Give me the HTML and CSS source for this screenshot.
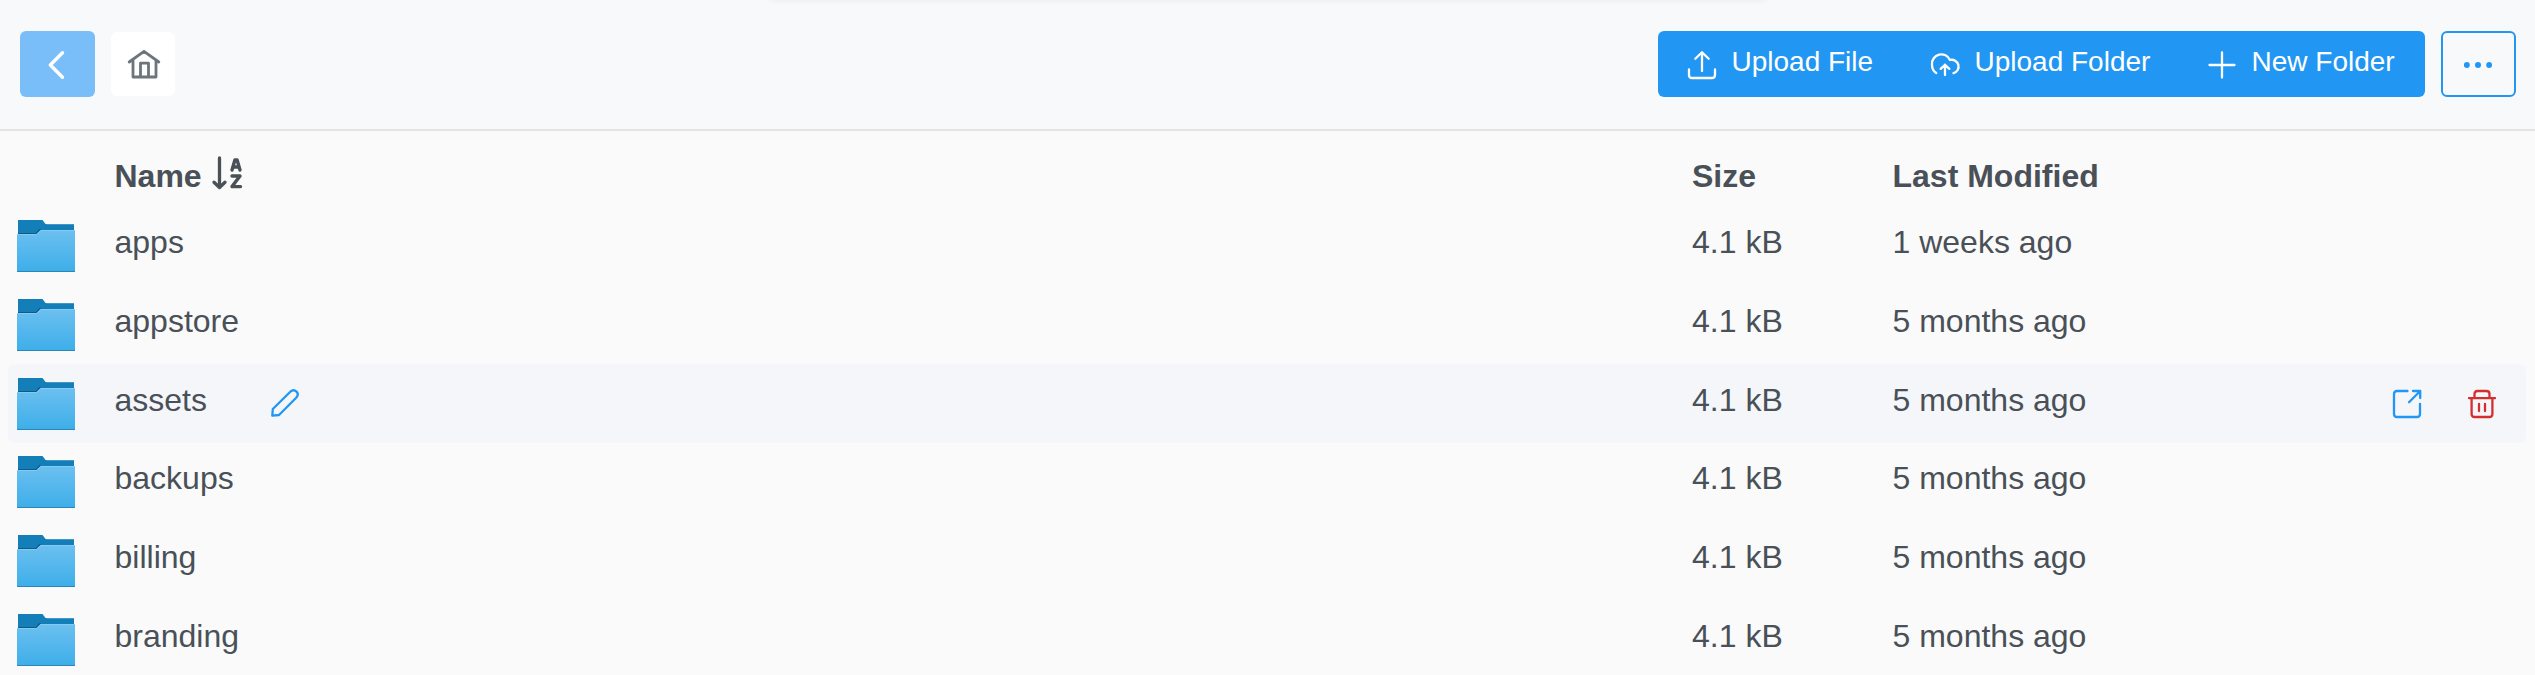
FILE: index.html
```
<!DOCTYPE html>
<html lang="en">
<head>
<meta charset="utf-8">
<title>Files</title>
<link rel="stylesheet" href="styles.css">
</head>
<body>
<svg class="defs" width="0" height="0">
  <defs>
    <linearGradient id="front" x1="0" y1="0" x2="0" y2="1">
      <stop offset="0" stop-color="#6cc0f0"/>
      <stop offset="1" stop-color="#3daee9"/>
    </linearGradient>
    <symbol id="folder" viewBox="0 0 58 52">
      <path d="M1 0H25.5L28.5 4H57V14H1Z" fill="#147eb8"/>
      <path d="M29 4H57V5H30Z" fill="#4398c6"/>
      <path d="M1 13H19L22 9.300H24V14H1Z" fill="#0e5b85"/>
      <path d="M0 14H19.500L23.500 10H58V52H0Z" fill="url(#front)"/>
      <path d="M0 14.500H19.700L23.700 10.500H58" fill="none" stroke="#84caf2" stroke-width="1"/>
      <path d="M0 51H58V52H0Z" fill="#2d86b5"/>
    </symbol>
  </defs>
</svg>
<div class="overhang"></div>
<header class="toolbar">
  <button class="btn back" aria-label="Back"><svg class="icon" width="28" height="28" viewBox="0 0 28 28"><path d="M19.500 1.800 7.300 14 19.500 26.200" stroke-width="3.400"/></svg></button>
  <button class="btn home" aria-label="Home"><svg class="icon" width="32" height="30" viewBox="0 0 32 30"><path d="M1.200 13 16 2.300 30.800 13M5 11V28H28V11M12.500 28V14.200H20.500V28" stroke-width="2.800"/></svg></button>
  <div class="group">
    <button class="btn primary file"><svg class="icon" width="28" height="28" viewBox="0 0 28 28"><path d="M14 20V1.500M7.300 7.800 14 1.200 20.700 7.800M1 18.500V24Q1 27 4 27H24Q27 27 27 24V18.500" stroke-width="2.300"/></svg><span>Upload File</span></button>
    <button class="btn primary folder"><svg class="icon" width="28" height="28" viewBox="0 0 28 28"><path d="M5.200 22Q1 19.500 1 13.500A9.400 9.400 0 0 1 19 9A6.800 6.800 0 0 1 22.500 22.200M14 24V13.700M9.700 17.900 14 13.700 18.300 17.900" stroke-width="2.300"/></svg><span>Upload Folder</span></button>
    <button class="btn primary new"><svg class="icon" width="28" height="28" viewBox="0 0 28 28"><path d="M14 1.500V26.500M1.500 14H26.500" stroke-width="2.300"/></svg><span>New Folder</span></button>
  </div>
  <button class="btn more" aria-label="More"><svg width="28" height="28" viewBox="0 0 28 28" fill="currentColor"><circle cx="2.800" cy="14" r="3"/><circle cx="14" cy="14" r="3"/><circle cx="25.200" cy="14" r="3"/></svg></button>
</header>
<main class="list">
  <div class="row head">
    <div class="name">Name<svg class="icon sort" width="30" height="34" viewBox="0 0 30 34"><path d="M7.500 2V31M2 26.200 7.500 31.500 13 26.200" stroke-width="3.300"/><path d="M20 14 22.900 4H25.100L28 14M21 11H27M20 20H28L20 30.600H28.500" stroke-width="3.400"/></svg></div>
    <div class="size">Size</div>
    <div class="date">Last Modified</div>
  </div>
  <div class="row"><svg class="dir"><use href="#folder"/></svg><div class="name">apps</div><div class="size">4.1 kB</div><div class="date">1 weeks ago</div></div>
  <div class="row"><svg class="dir"><use href="#folder"/></svg><div class="name">appstore</div><div class="size">4.1 kB</div><div class="date">5 months ago</div></div>
  <div class="row active"><svg class="dir"><use href="#folder"/></svg><div class="name">assets<svg class="icon edit" width="28" height="28" viewBox="0 0 28 28"><path d="M1.300 26.700 1.800 20 19.300 2.800Q22.400-.2 25.500 2.600Q28.200 5.500 25.200 8.700L8 26Z" stroke-width="2.300"/></svg></div><div class="size">4.1 kB</div><div class="date">5 months ago</div>
    <div class="actions">
      <svg class="icon open" width="28" height="28" viewBox="0 0 28 28"><path d="M14.500 1H4Q1 1 1 4V24Q1 27 4 27H24Q27 27 27 24V14M16 12.300 27 1.300M20 1H27.200V8" stroke-width="2.300"/></svg>
      <svg class="icon trash" width="28" height="28" viewBox="0 0 28 28"><path d="M1 8.200H27M3.600 8.200V24Q3.600 27 6.600 27H21.400Q24.400 27 24.400 24V8.200M6.500 8V4Q6.500 1 9.500 1H18.500Q21.500 1 21.500 4V8M11 14V21M17 14V21" stroke-width="2.300"/></svg>
    </div>
  </div>
  <div class="row"><svg class="dir"><use href="#folder"/></svg><div class="name">backups</div><div class="size">4.1 kB</div><div class="date">5 months ago</div></div>
  <div class="row"><svg class="dir"><use href="#folder"/></svg><div class="name">billing</div><div class="size">4.1 kB</div><div class="date">5 months ago</div></div>
  <div class="row"><svg class="dir"><use href="#folder"/></svg><div class="name">branding</div><div class="size">4.1 kB</div><div class="date">5 months ago</div></div>
</main>
</body>
</html>
```
FILE: styles.css
```
* { box-sizing: border-box; }
body {
  margin: 0;
  height: 675px;
  overflow: hidden;
  background: #fafafa;
  color: #495057;
  font: 32px/40px "Liberation Sans", Arial, sans-serif;
}
.defs { position: absolute; }
.overhang {
  position: absolute;
  top: -10px;
  left: 770px;
  width: 996px;
  height: 10px;
  box-shadow: 0 1px 6px rgba(0, 0, 0, .05);
}
.icon {
  fill: none;
  stroke: currentColor;
  stroke-linecap: round;
  stroke-linejoin: round;
  flex: none;
  overflow: visible;
}
.toolbar {
  display: flex;
  align-items: center;
  height: 131px;
  padding: 0 19px 1px 20px;
  border-bottom: 2px solid #e3e4e5;
  background: #f8f9fb;
}
.btn {
  display: flex;
  align-items: center;
  justify-content: center;
  height: 66px;
  padding: 0;
  border: 0;
  border-radius: 6px;
  font: inherit;
  font-size: 28px;
}
.back {
  width: 75px;
  background: #79bef8;
  color: #fff;
  padding: 2px 2px 0 0;
}
.home {
  width: 64px;
  height: 64px;
  margin-left: 16px;
  background: #fff;
  color: #6c757d;
  padding-left: 2px;
}
.group {
  display: flex;
  margin-left: auto;
  border-radius: 6px;
  background: #2196f3;
}
.primary {
  justify-content: flex-start;
  gap: 15.5px;
  padding-left: 30px;
  background: transparent;
  color: #fff;
  white-space: nowrap;
}
.primary .icon { margin-top: 2px; }
.primary span { margin-top: -5px; }
.file { width: 243px; }
.folder { width: 277px; }
.new { width: 247px; padding-left: 30px; }
.more {
  width: 75px;
  margin-left: 16px;
  border: 2px solid #2196f3;
  background: transparent;
  color: #2196f3;
  padding: 2px 1px 0 0;
}
.list { padding: 0 9px 0 8px; }
.row {
  display: grid;
  grid-template-columns: 97.5px 1577.5px 200px 1fr auto;
  align-items: center;
  height: 78.8px;
  padding-left: 9px;
  border-radius: 6px;
}
.row > div { margin-top: -8px; }
.head { height: 75.7px; font-weight: bold; }
.head > div { margin-top: 14px; }
.head .name { margin-top: 15px; }
.name { grid-column: 2; display: flex; align-items: center; }
.date { padding-left: .5px; }
.dir { width: 58px; height: 52px; }
.active { background: #f5f6fa; }
.sort { margin: -7px 0 0 10px; }
.edit { margin: 7px 0 0 64px; color: #2196f3; }
.actions { display: flex; gap: 47px; padding-right: 30px; }
.row .actions { margin-top: 0; }
.open { color: #2196f3; }
.trash { color: #d32f2f; }
```
